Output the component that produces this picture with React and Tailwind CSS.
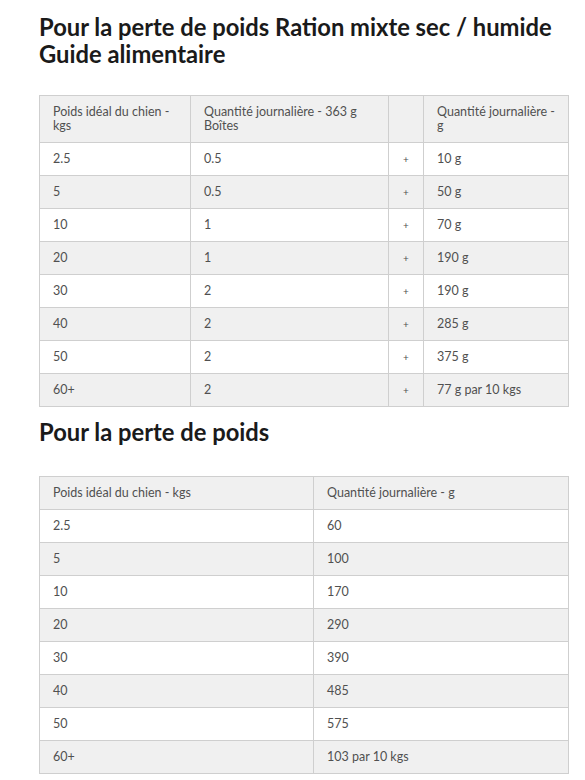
export default function App() {
  const mixed = [
    ["2.5", "0.5", "10 g"],
    ["5", "0.5", "50 g"],
    ["10", "1", "70 g"],
    ["20", "1", "190 g"],
    ["30", "2", "190 g"],
    ["40", "2", "285 g"],
    ["50", "2", "375 g"],
    ["60+", "2", "77 g par 10 kgs"],
  ];
  const dry = [
    ["2.5", "60"],
    ["5", "100"],
    ["10", "170"],
    ["20", "290"],
    ["30", "390"],
    ["40", "485"],
    ["50", "575"],
    ["60+", "103 par 10 kgs"],
  ];

  const cell = "border border-[#cfcfcf] px-[13px] align-middle";

  return (
    <div
      className="min-h-[780px] w-[585px] bg-white pl-[39px] pr-[16px] pt-[14px] text-[#222]"
      style={{ fontFamily: "Lato, 'Open Sans', sans-serif" }}
    >
      <h1 className="text-[23.75px] font-bold leading-[27px] text-[#1a1a1a]">
        Pour la perte de poids Ration mixte sec / humide
        <br />
        Guide alimentaire
      </h1>

      <table className="mt-[27px] w-[530px] border-collapse text-[12.5px] text-[#505050]">
        <colgroup>
          <col className="w-[151px]" />
          <col className="w-[198px]" />
          <col className="w-[35px]" />
          <col />
        </colgroup>
        <thead>
          <tr className="h-[47px] bg-[#f0f0f0]">
            <td className={`${cell} leading-[14px]`}>
              Poids idéal du chien -<br />
              kgs
            </td>
            <td className={`${cell} leading-[14px]`}>
              Quantité journalière - 363 g<br />
              Boîtes
            </td>
            <td className={cell}></td>
            <td className={`${cell} leading-[14px]`}>
              Quantité journalière -<br />g
            </td>
          </tr>
        </thead>
        <tbody>
          {mixed.map((r, i) => (
            <tr
              key={r[0]}
              className={`h-[33px] ${i % 2 === 1 ? "bg-[#f0f0f0]" : "bg-white"}`}
            >
              <td className={cell}>{r[0]}</td>
              <td className={cell}>{r[1]}</td>
              <td className={`${cell} px-0 text-center text-[10px]`}>+</td>
              <td className={cell}>{r[2]}</td>
            </tr>
          ))}
        </tbody>
      </table>

      <h2 className="mt-[12px] text-[23.75px] font-bold leading-[27px] text-[#1a1a1a]">
        Pour la perte de poids
      </h2>

      <table className="mt-[30px] w-[530px] border-collapse text-[12.5px] text-[#505050]">
        <colgroup>
          <col className="w-[274px]" />
          <col />
        </colgroup>
        <thead>
          <tr className="h-[33px] bg-[#f0f0f0]">
            <td className={cell}>Poids idéal du chien - kgs</td>
            <td className={cell}>Quantité journalière - g</td>
          </tr>
        </thead>
        <tbody>
          {dry.map((r, i) => (
            <tr
              key={r[0]}
              className={`h-[33px] ${i % 2 === 1 ? "bg-[#f0f0f0]" : "bg-white"}`}
            >
              <td className={cell}>{r[0]}</td>
              <td className={cell}>{r[1]}</td>
            </tr>
          ))}
        </tbody>
      </table>
    </div>
  );
}
